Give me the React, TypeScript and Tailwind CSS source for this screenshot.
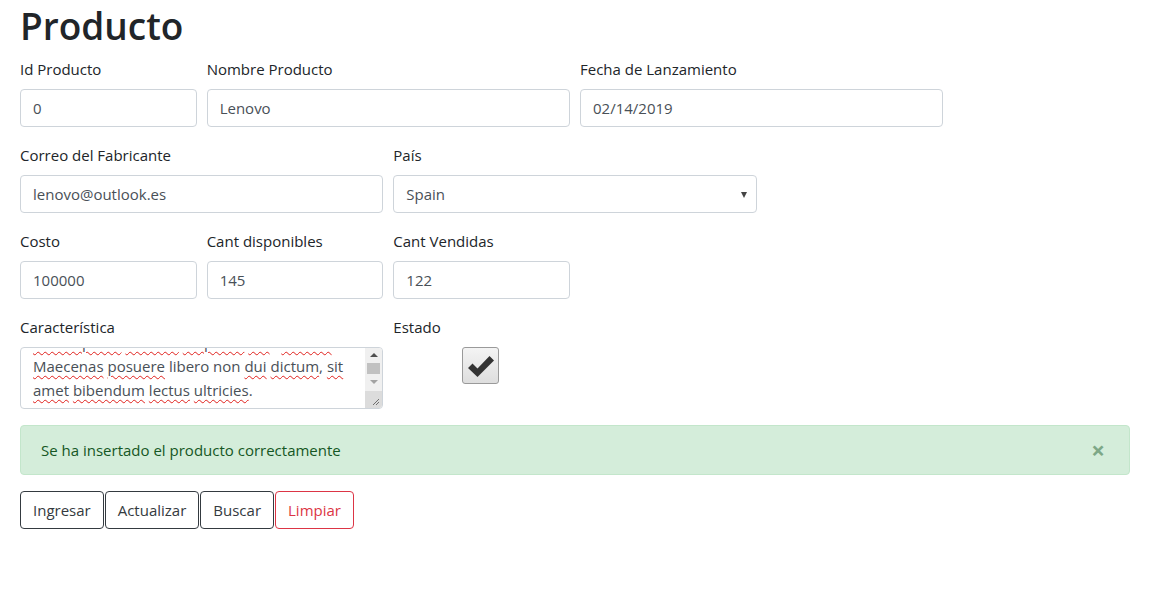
import { useState } from "react"

const font = "font-['Segoe_UI','Open_Sans','Noto_Sans',sans-serif]"

const inputCls =
  "flex h-[38px] w-full items-center rounded border border-[#ced4da] bg-white px-3 pt-px text-[15px] text-[#495057]"

function Field({ label, value, span }: { label: string; value: string; span: string }) {
  return (
    <div className={`${span} flex flex-col`}>
      <label className="mb-2 leading-6 text-[#212529]">{label}</label>
      <div className={inputCls}>{value}</div>
    </div>
  )
}

function Squiggle({ children }: { children: React.ReactNode }) {
  return (
    <span className="underline decoration-[#e0201c] decoration-wavy decoration-1 underline-offset-[3px]">
      {children}
    </span>
  )
}

function FakeTextarea() {
  return (
    <div className="relative h-[62px] w-full overflow-hidden rounded border border-[#ced4da] bg-white text-[15px] text-[#495057]">
      <div className="mt-[-18px] whitespace-nowrap pl-3 leading-6">
        <div>
          <Squiggle>Loremipsum</Squiggle> <Squiggle>dolorsit</Squiggle> <Squiggle>adipiscin</Squiggle>{" "}
          <Squiggle>elit</Squiggle> &nbsp; <Squiggle>Nullam</Squiggle>
        </div>
        <div>
          <Squiggle>Maecenas</Squiggle> <Squiggle>posuere</Squiggle> libero non <Squiggle>dui</Squiggle>{" "}
          <Squiggle>dictum</Squiggle>, <Squiggle>sit</Squiggle>
        </div>
        <div>
          <Squiggle>amet</Squiggle> <Squiggle>bibendum</Squiggle> <Squiggle>lectus</Squiggle>{" "}
          <Squiggle>ultricies</Squiggle>.
        </div>
      </div>
      {/* scrollbar */}
      <div className="absolute right-0 top-0 flex h-full w-[17px] flex-col items-center bg-[#f0f0f0]">
        <div className="mt-[5px] h-0 w-0 border-x-[4px] border-b-[4px] border-x-transparent border-b-[#505050]" />
        <div className="mt-[6px] h-[11px] w-[13px] bg-[#c1c1c1]" />
        <div className="mt-[6px] h-0 w-0 border-x-[4px] border-t-[4px] border-x-transparent border-t-[#a3a3a3]" />
        <div className="mt-auto h-[17px] w-full bg-[#dcdcdc]">
          <svg width="17" height="17" viewBox="0 0 17 17">
            <path d="M14 8 L8 14 M14 11 L11 14" stroke="#707070" strokeWidth="1" />
          </svg>
        </div>
      </div>
    </div>
  )
}

export default function App() {
  const [checked] = useState(true)

  return (
    <div className={`${font} min-h-[594px] bg-white px-5 pt-px text-[15px] text-[#212529]`}>
      <h1 className="mb-2 pt-[2px] text-[37px] font-semibold leading-[46px]">Producto</h1>

      <div className="grid w-[1110px] grid-cols-12 gap-x-[10px] gap-y-4">
        <Field span="col-span-2" label="Id Producto" value="0" />
        <Field span="col-span-4" label="Nombre Producto" value="Lenovo" />
        <Field span="col-span-4" label="Fecha de Lanzamiento" value="02/14/2019" />
        <div className="col-span-2" />

        <Field span="col-span-4" label="Correo del Fabricante" value="lenovo@outlook.es" />
        <div className="col-span-4 flex flex-col">
          <label className="mb-2 leading-6">País</label>
          <div className={`${inputCls} justify-between`}>
            <span>Spain</span>
            <span className="mr-[-3px] h-0 w-0 border-x-[3px] border-t-[6px] border-x-transparent border-t-[#444]" />
          </div>
        </div>
        <div className="col-span-4" />

        <Field span="col-span-2" label="Costo" value="100000" />
        <Field span="col-span-2" label="Cant disponibles" value="145" />
        <Field span="col-span-2" label="Cant Vendidas" value="122" />
        <div className="col-span-6" />

        <div className="col-span-4 flex flex-col">
          <label className="mb-2 leading-6">Característica</label>
          <FakeTextarea />
        </div>
        <div className="col-span-4 flex flex-col">
          <label className="mb-2 leading-6">Estado</label>
          <div className="ml-[69px] flex h-[37px] w-[37px] items-center justify-center rounded-[3px] border border-[#9a9a9a] bg-gradient-to-b from-[#f4f4f4] to-[#dedede]">
            {checked && (
              <svg width="30" height="28" viewBox="0 0 30 28">
                <path d="M2 16 L6.5 11.5 L11.5 16.5 L23.5 4 L28 8.5 L11.5 25 Z" fill="#333" />
              </svg>
            )}
          </div>
        </div>
        <div className="col-span-4" />

        <div className="col-span-12 flex h-[50px] items-center justify-between rounded border border-[#c3e6cb] bg-[#d4edda] pl-5 pr-6 text-[#155724]">
          <span>Se ha insertado el producto correctamente</span>
          <span className="text-2xl font-bold leading-none text-[#7da887]">×</span>
        </div>
      </div>

      <div className="mt-4 flex gap-px">
        {["Ingresar", "Actualizar", "Buscar"].map((b) => (
          <button
            key={b}
            className="h-[38px] rounded border border-[#343a40] bg-white px-3 leading-6 text-[#343a40]"
          >
            {b}
          </button>
        ))}
        <button className="h-[38px] rounded border border-[#dc3545] bg-white px-3 leading-6 text-[#dc3545]">
          Limpiar
        </button>
      </div>
    </div>
  )
}
